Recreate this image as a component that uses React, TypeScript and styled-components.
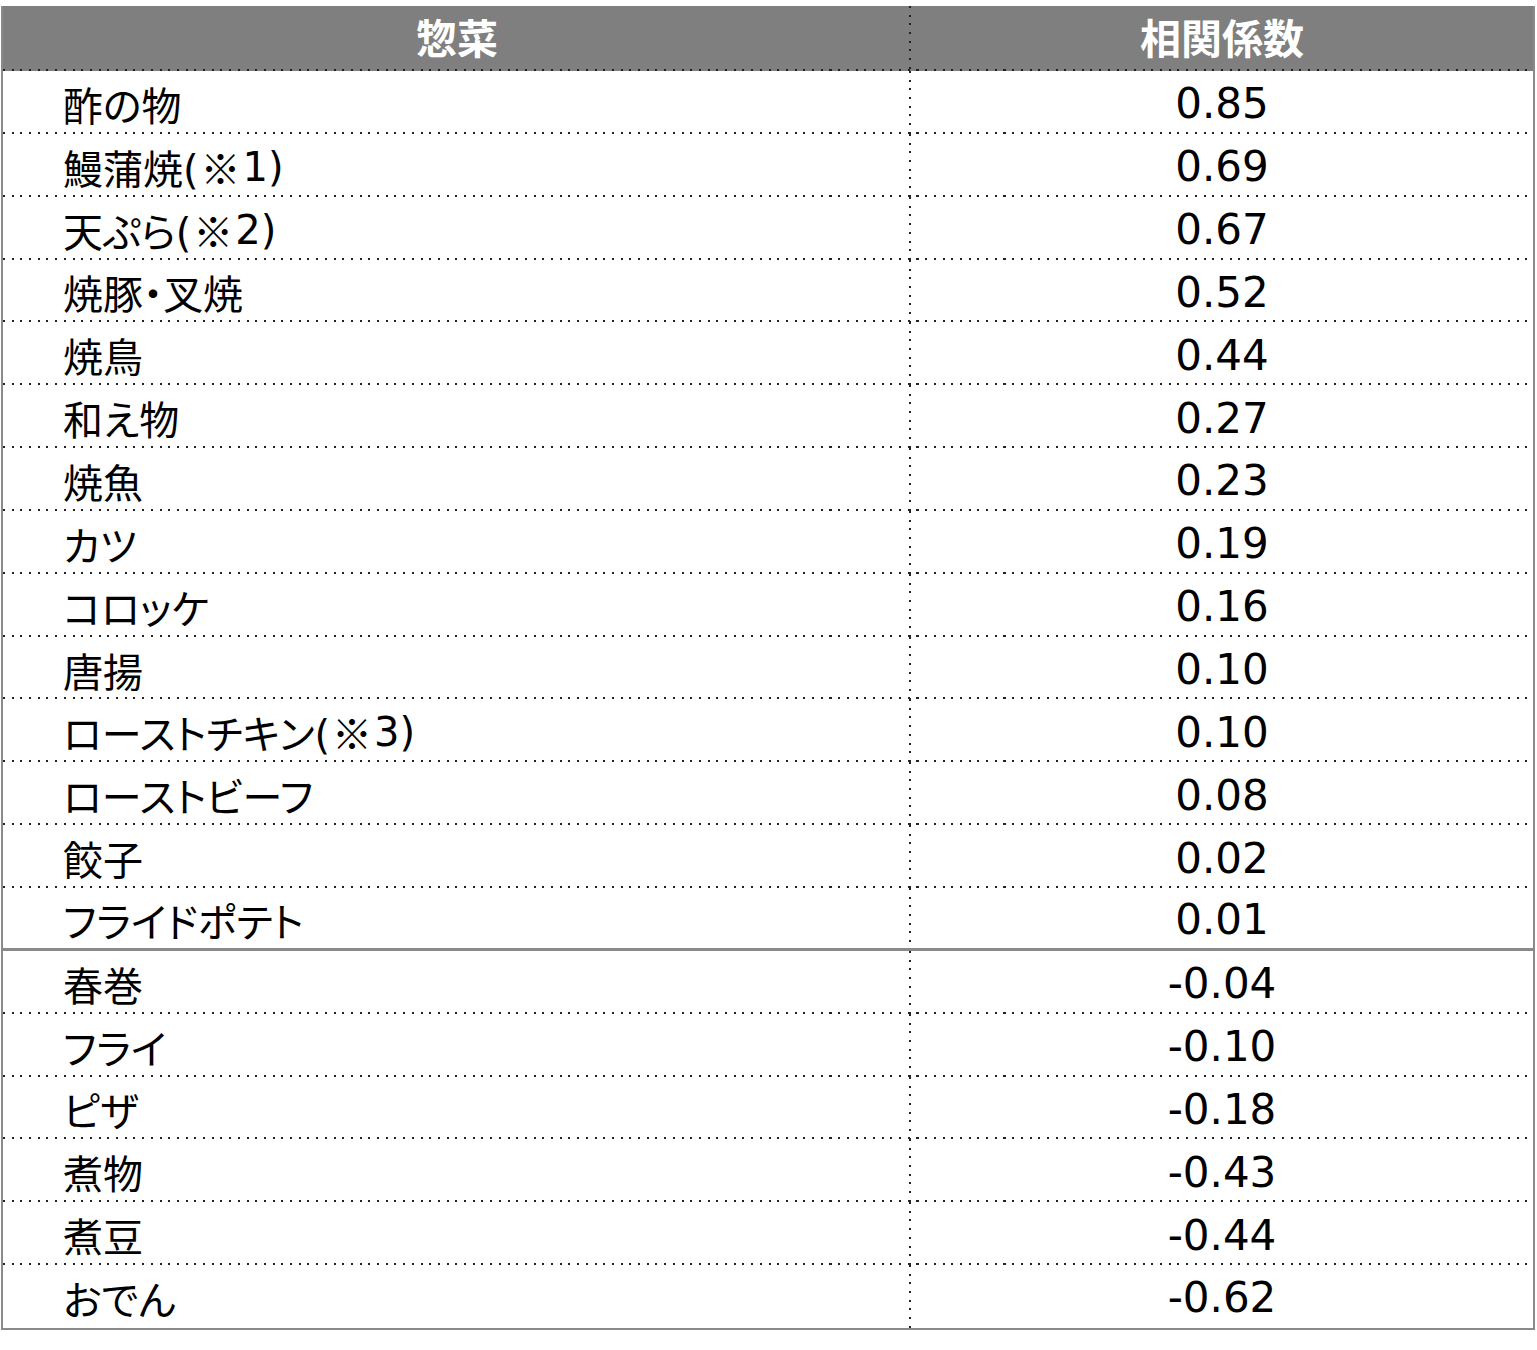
import React from "react";
import styled, { createGlobalStyle } from "styled-components";

const GlobalStyle = createGlobalStyle`
  body {
    margin: 0;
    background: #fff;
    font-family: "DejaVu Sans", "Noto Sans CJK JP", sans-serif;
  }
`;

const dotsH = `repeating-linear-gradient(to right, #222 0 2px, transparent 2px 8.7px)`;
const dotsV = `repeating-linear-gradient(to bottom, #222 0 2px, transparent 2px 8.7px)`;

const Table = styled.div`
  margin: 6px 0 0 1px;
  width: 1530px;
  border: 2px solid #8a8a8a;
  border-top: none;
  background: #fff;
`;

const HeaderRow = styled.div`
  display: grid;
  grid-template-columns: 908px 1fr;
  height: 65px;
  background-color: #7f7f7f;
  background-image: ${dotsH};
  background-size: 100% 2px;
  background-position: left bottom;
  background-repeat: no-repeat;
`;

const HeadCell = styled.div<{ $divider?: boolean }>`
  display: flex;
  align-items: center;
  justify-content: center;
  padding-bottom: 6px;
  color: #fff;
  font-family: "Noto Sans CJK JP", sans-serif;
  font-weight: 700;
  font-size: 41px;
  ${(p) =>
    p.$divider &&
    `
    background-image: ${dotsV};
    background-size: 2px 100%;
    background-position: right top;
    background-repeat: no-repeat;
  `}
`;

const Row = styled.div<{ $edge: "dots" | "solid" | "none" }>`
  display: grid;
  grid-template-columns: 908px 1fr;
  box-sizing: border-box;
  height: 62.85px;
  ${(p) =>
    p.$edge === "dots" &&
    `
    background-image: ${dotsH};
    background-size: 100% 2px;
    background-position: left bottom;
    background-repeat: no-repeat;
  `}
  ${(p) => p.$edge === "solid" && `border-bottom: 3px solid #8a8a8a;`}
`;

const NameCell = styled.div`
  display: flex;
  align-items: center;
  padding-left: 60px;
  padding-top: 3px;
  font-size: 40px;
  color: #000;
  font-feature-settings: "palt";
  background-image: ${dotsV};
  background-size: 2px 100%;
  background-position: right top;
  background-repeat: no-repeat;
  white-space: nowrap;
`;

const Kome = styled.span`
  font-family: "Noto Sans CJK JP", sans-serif;
  font-feature-settings: normal;
  margin: 0 2px;
`;

const ValueCell = styled.div`
  display: flex;
  align-items: center;
  justify-content: center;
  padding-top: 3px;
  font-size: 42px;
  color: #000;
`;

const rows: [string, string][] = [
  ["酢の物", "0.85"],
  ["鰻蒲焼(※1)", "0.69"],
  ["天ぷら(※2)", "0.67"],
  ["焼豚・叉焼", "0.52"],
  ["焼鳥", "0.44"],
  ["和え物", "0.27"],
  ["焼魚", "0.23"],
  ["カツ", "0.19"],
  ["コロッケ", "0.16"],
  ["唐揚", "0.10"],
  ["ローストチキン(※3)", "0.10"],
  ["ローストビーフ", "0.08"],
  ["餃子", "0.02"],
  ["フライドポテト", "0.01"],
  ["春巻", "-0.04"],
  ["フライ", "-0.10"],
  ["ピザ", "-0.18"],
  ["煮物", "-0.43"],
  ["煮豆", "-0.44"],
  ["おでん", "-0.62"],
];

// ※ is kept in the CJK face so it stays full width like the source sheet
const renderName = (name: string) =>
  name.split("※").map((part, i) => (
    <React.Fragment key={i}>
      {i > 0 && <Kome>※</Kome>}
      {part}
    </React.Fragment>
  ));

export default () => {
  return (
    <>
      <GlobalStyle />
      <Table>
        <HeaderRow>
          <HeadCell $divider>惣菜</HeadCell>
          <HeadCell>相関係数</HeadCell>
        </HeaderRow>
        {rows.map(([name, value], i) => (
          <Row
            key={i}
            $edge={i === 13 ? "solid" : i === rows.length - 1 ? "none" : "dots"}
          >
            <NameCell>{renderName(name)}</NameCell>
            <ValueCell>{value}</ValueCell>
          </Row>
        ))}
      </Table>
    </>
  );
};
